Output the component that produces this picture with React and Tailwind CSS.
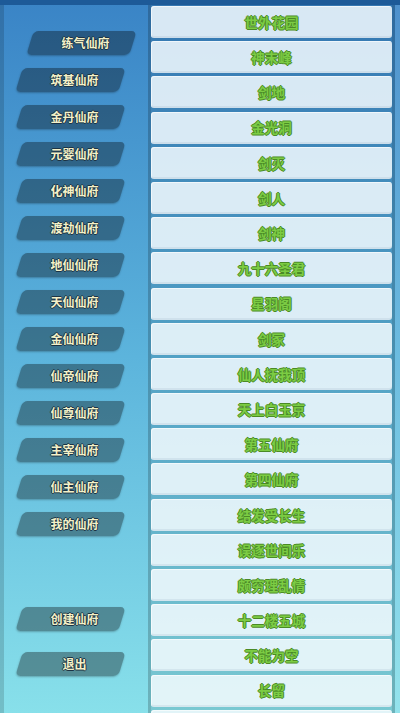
import React from 'react';

const realms = [
    '练气仙府', '筑基仙府', '金丹仙府', '元婴仙府', '化神仙府', '渡劫仙府', '地仙仙府',
    '天仙仙府', '金仙仙府', '仙帝仙府', '仙尊仙府', '主宰仙府', '仙主仙府', '我的仙府',
];

const places = [
    '世外花园', '神末峰', '剑地', '金光洞', '剑灭', '剑人', '剑神', '九十六圣君', '星羽阁', '剑冢',
    '仙人抚我顶', '天上白玉京', '第五仙府', '第四仙府', '结发受长生', '误逐世间乐', '颇穷理乱情',
    '十二楼五城', '不能为空', '长留', '',
];

const font = { fontFamily: '"Noto Sans CJK SC", "Noto Sans", sans-serif' };

function SideButton({ label, shift }) {
    return (
        <div className={`relative h-[24px] w-[103px] ${shift ? 'ml-[26px]' : 'ml-[15px]'}`}>
            <div className="absolute inset-0 -skew-x-[17deg] rounded-[5px] bg-black/35 shadow-[0_1px_2px_rgba(0,0,0,0.25)]" />
            <span className="relative flex h-full items-center justify-center pl-2 text-[12px] font-bold text-[#f4f1c8] [text-shadow:-1px_0_#1c3344,1px_0_#1c3344,0_-1px_#1c3344,0_1px_#1c3344]">
                {label}
            </span>
        </div>
    );
}

export default function App() {
    return (
        <div style={font} className="flex h-[713px] w-full flex-col overflow-hidden bg-gradient-to-b from-[#3a84c6] via-[#5cb4dc] to-[#88e0ea]">
            <div className="h-[5px] shrink-0 bg-[#1d5a98]" />
            <div className="flex flex-1">
                <div className="w-[4px] bg-black/15" />

                {/* left menu */}
                <div className="flex w-[144px] flex-col pt-[26px]">
                    <div className="flex flex-col gap-[13px]">
                        {realms.map((r, i) => (
                            <SideButton key={r} label={r} shift={i === 0} />
                        ))}
                    </div>
                    <div className="mt-[71px]">
                        <SideButton label="创建仙府" />
                    </div>
                    <div className="mt-[21px]">
                        <SideButton label="退出" />
                    </div>
                </div>

                {/* place list */}
                <div className="flex w-[244px] flex-col gap-[3.2px] border-l-[3px] border-black/10 bg-black/10 pt-[1px]">
                    {places.map((p, i) => (
                        <div
                            key={i}
                            className="flex h-[32px] shrink-0 items-center justify-center rounded-[3px] bg-[#f4fbff]/85 shadow-[inset_1px_1px_0_rgba(255,255,255,0.6),inset_0_-2px_0_rgba(0,40,80,0.06)]"
                        >
                            <span className="text-[13.5px] font-bold text-[#7ccc44] [text-shadow:-1px_0_#4a8a26,1px_0_#4a8a26,0_-1px_#4a8a26,0_1px_#4a8a26]">
                                {p}
                            </span>
                        </div>
                    ))}
                </div>

                <div className="w-[3px] bg-black/20" />
                <div className="w-[5px] bg-white/10" />
            </div>
        </div>
    );
}
